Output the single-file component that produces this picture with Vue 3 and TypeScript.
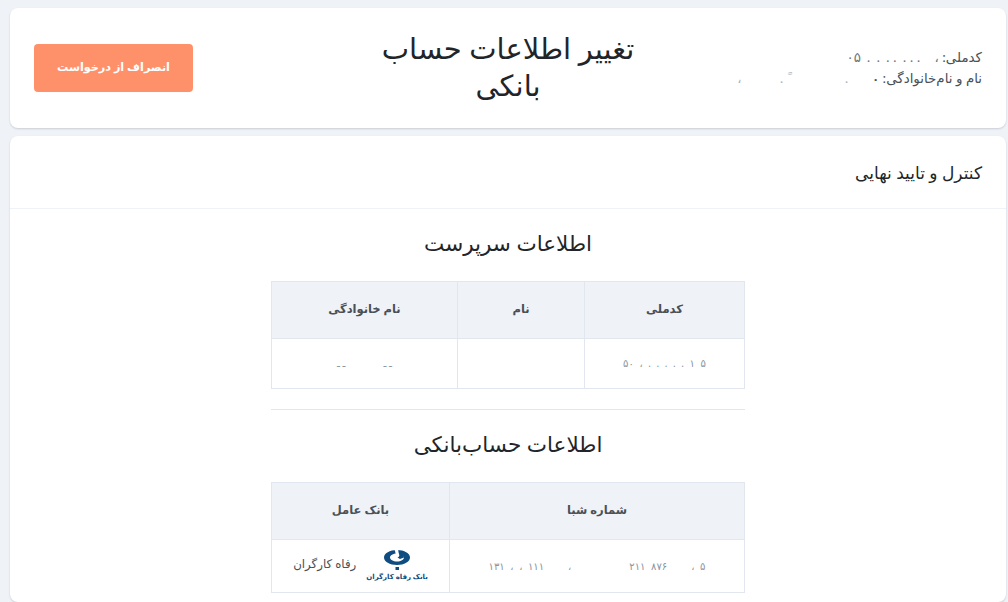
<script setup lang="ts">
const guardianHead: string[] = ['کدملی', 'نام', 'نام خانوادگی']
const bankHead: string[] = ['شماره شبا', 'بانک عامل']
</script>

<template>
  <div class="page" dir="rtl">
    <header class="card top">
      <div class="info">
        <div class="line">کدملی: <span class="mask">،<i class="g14"></i>. . .<i class="g6"></i>. .<i class="g6"></i>.<i class="g6"></i>.<i class="g6"></i>۰۵</span></div>
        <div class="line">نام و نام‌خانوادگی: <b class="dot">۰</b><i class="g24"></i><span class="mask faint">.</span><i class="g58"></i><span class="mask faint">ً .</span><i class="g38"></i><span class="mask faint">،</span></div>
      </div>
      <h1 class="title">تغییر اطلاعات حساب بانکی</h1>
      <div class="actions">
        <button class="cancel" type="button">انصراف از درخواست</button>
      </div>
    </header>

    <main class="card body">
      <div class="body-head">کنترل و تایید نهایی</div>
      <div class="content">
        <h2 class="section">اطلاعات سرپرست</h2>
        <table class="grid">
          <colgroup>
            <col class="c1" /><col class="c2" /><col class="c3" />
          </colgroup>
          <thead>
            <tr><th v-for="h in guardianHead" :key="h">{{ h }}</th></tr>
          </thead>
          <tbody>
            <tr class="r1">
              <td><span class="tiny spread">۵ ۱ . . . . . ، ۵۰</span></td>
              <td></td>
              <td><span class="tiny">ـ ـ<i class="g38"></i>ـ ـ</span></td>
            </tr>
          </tbody>
        </table>
        <hr class="rule" />
        <h2 class="section">اطلاعات حساب‌بانکی</h2>
        <table class="grid">
          <colgroup>
            <col class="b1" /><col class="b2" />
          </colgroup>
          <thead>
            <tr><th v-for="h in bankHead" :key="h">{{ h }}</th></tr>
          </thead>
          <tbody>
            <tr class="r2">
              <td><span class="tiny spread">۵ ،<i class="g24"></i>۸۷۶ ۲۱۱<i class="g58"></i>،<i class="g24"></i>۱۱۱ ، ، ۱۳۱</span></td>
              <td>
                <div class="bank">
                  <span class="logo">
                    <svg width="26" height="20" viewBox="0 0 26 20" aria-hidden="true">
                      <path fill="#0f4c81" fill-rule="evenodd" d="M13 0C5.800 0 0 3.400 0 7.500S5.800 15 13 15s13-3.400 13-7.500S20.200 0 13 0zm0 3.500c3.900 0 7 1.800 7 4s-3.100 4-7 4-7-1.800-7-4 3.100-4 7-4z" />
                      <path fill="#fff" d="M10.500-1h3.500l1 6h-3z" />
                      <path fill="#0f4c81" d="M15 1.500l4.500 1.500.5 4.500-4 1.500-2.500-1.500c1.500-.5 2.300-1.800 1.500-3.500z" />
                      <path fill="#0f4c81" d="M11.500 17h3.500v3h-3.500z" />
                    </svg>
                    <span class="logo-text">بانک رفاه کارگران</span>
                  </span>
                  <span class="bank-name">رفاه کارگران</span>
                </div>
              </td>
            </tr>
          </tbody>
        </table>
      </div>
    </main>
  </div>
</template>

<style>
html, body { margin: 0; height: 100%; overflow: hidden; background: #eff2f7; }
</style>

<style scoped>
.page {
  box-sizing: border-box;
  height: 602px;
  overflow: hidden;
  padding: 8px 2px 0 10px;
  background: #eff2f7;
  font-family: "Noto Sans", "DejaVu Sans", sans-serif;
  color: #495057;
  display: flex;
  flex-direction: column;
  gap: 8px;
}
.card {
  background: #fff;
  border-radius: 8px;
  box-shadow: 0 1px 2px rgba(56, 65, 74, 0.2);
}
.top {
  box-sizing: border-box;
  flex: 0 0 120px;
  padding: 0 24px;
  display: grid;
  grid-template-columns: repeat(3, 1fr);
  align-items: center;
}
.info { font-size: 13.400px; line-height: 21px; color: #495057; }
.line { white-space: nowrap; }
.mask { color: #6c757d; }
.faint { color: #aab2bc; }
.dot { color: #495057; font-size: 11px; }
i { display: inline-block; }
.g6 { width: 6px; }
.g14 { width: 14px; }
.g24 { width: 24px; }
.g38 { width: 38px; }
.g58 { width: 58px; }
.title {
  margin: 0 0 4px;
  padding: 0 10px;
  font-size: 29px;
  line-height: 37px;
  font-weight: 400;
  color: #212529;
  text-align: center;
}
.actions { display: flex; justify-content: flex-end; }
.cancel {
  width: 159px;
  height: 48px;
  border: 0;
  border-radius: 4px;
  padding: 0 0 4px;
  background: #ff916a;
  color: #fff;
  font: 700 11.200px "Noto Sans", "DejaVu Sans", sans-serif;
}
.body { flex: 1; }
.body-head {
  height: 73px;
  box-sizing: border-box;
  padding: 0 24px;
  display: flex;
  align-items: center;
  font-size: 17px;
  color: #212529;
  border-bottom: 1px solid #eff2f7;
}
.content {
  width: 474px;
  margin: 0 auto;
}
.section {
  margin: 0;
  height: 72px;
  padding-bottom: 5px;
  box-sizing: border-box;
  display: flex;
  align-items: center;
  justify-content: center;
  font-size: 21.500px;
  font-weight: 400;
  color: #212529;
}
.grid {
  width: 473px;
  border-collapse: collapse;
  table-layout: fixed;
  font-size: 13px;
}
.grid th, .grid td { border: 1px solid #e2e6ee; padding: 0; text-align: center; }
.grid td { padding-bottom: 3px; box-sizing: border-box; }
.grid th {
  height: 57px;
  padding-bottom: 3px;
  box-sizing: border-box;
  background: #eff2f7;
  font-size: 11.500px;
  font-weight: 700;
  color: #495057;
}
.c1 { width: 160px; }
.c2 { width: 127px; }
.c3 { width: 186px; }
.b1 { width: 295px; }
.b2 { width: 178px; }
.r1 td { height: 50px; }
.r2 td { height: 53px; }
.tiny { font-size: 10px; color: #8a94a0; }
.spread { word-spacing: 3px; }
.rule { border: 0; border-top: 1px solid #e2e6ee; margin: 20px 0 0; }
.bank { display: flex; align-items: center; justify-content: center; gap: 10px; }
.logo { display: flex; flex-direction: column; align-items: center; line-height: 1; gap: 3px; }
.logo-text { font-size: 7px; font-weight: 700; color: #0f4c81; white-space: nowrap; }
.bank-name { font-size: 11.800px; padding-bottom: 4px; }
</style>
